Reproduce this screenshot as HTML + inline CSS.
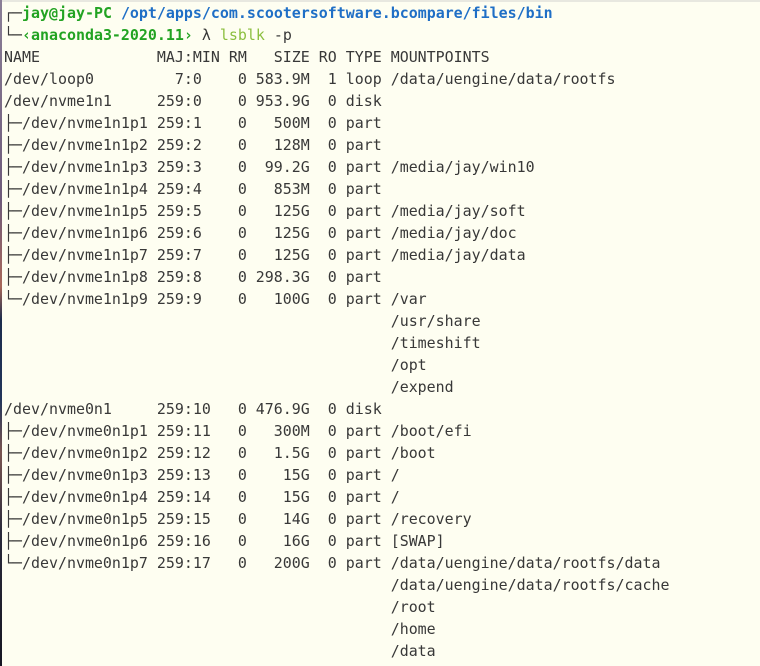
<!DOCTYPE html>
<html><head><meta charset="utf-8"><style>
html,body{margin:0;padding:0;width:760px;height:666px;overflow:hidden;background:#fefef1;}
.strip{position:absolute;left:0;top:0;width:2px;height:666px;background:linear-gradient(#8a7f96 0%,#6e5a7a 30%,#a8685a 43%,#1c2c4c 48%,#22355a 60%,#7a5550 68%,#2a2a3a 80%,#161622 100%);}
.top{position:absolute;left:0;top:0;width:760px;height:2px;background:#e8e8e0;}
pre{position:absolute;left:4px;top:2px;margin:0;font-family:"DejaVu Sans Mono","Liberation Mono",monospace;font-size:14.95px;line-height:22px;color:#383838;}
.g{color:#22a322;font-weight:bold}
.b{color:#1f6fc6;font-weight:bold}
.l{color:#8cbf3f}
</style></head><body>
<div class="top"></div><div class="strip"></div>
<pre>┌─<span class="g">jay@jay-PC</span> <span class="b">/opt/apps/com.scootersoftware.bcompare/files/bin</span>
└─<span class="g">‹anaconda3-2020.11›</span> λ <span class="l">lsblk</span> -p
NAME             MAJ:MIN RM   SIZE RO TYPE MOUNTPOINTS
/dev/loop0         7:0    0 583.9M  1 loop /data/uengine/data/rootfs
/dev/nvme1n1     259:0    0 953.9G  0 disk 
├─/dev/nvme1n1p1 259:1    0   500M  0 part 
├─/dev/nvme1n1p2 259:2    0   128M  0 part 
├─/dev/nvme1n1p3 259:3    0  99.2G  0 part /media/jay/win10
├─/dev/nvme1n1p4 259:4    0   853M  0 part 
├─/dev/nvme1n1p5 259:5    0   125G  0 part /media/jay/soft
├─/dev/nvme1n1p6 259:6    0   125G  0 part /media/jay/doc
├─/dev/nvme1n1p7 259:7    0   125G  0 part /media/jay/data
├─/dev/nvme1n1p8 259:8    0 298.3G  0 part 
└─/dev/nvme1n1p9 259:9    0   100G  0 part /var
                                           /usr/share
                                           /timeshift
                                           /opt
                                           /expend
/dev/nvme0n1     259:10   0 476.9G  0 disk 
├─/dev/nvme0n1p1 259:11   0   300M  0 part /boot/efi
├─/dev/nvme0n1p2 259:12   0   1.5G  0 part /boot
├─/dev/nvme0n1p3 259:13   0    15G  0 part /
├─/dev/nvme0n1p4 259:14   0    15G  0 part /
├─/dev/nvme0n1p5 259:15   0    14G  0 part /recovery
├─/dev/nvme0n1p6 259:16   0    16G  0 part [SWAP]
└─/dev/nvme0n1p7 259:17   0   200G  0 part /data/uengine/data/rootfs/data
                                           /data/uengine/data/rootfs/cache
                                           /root
                                           /home
                                           /data</pre>
</body></html>
